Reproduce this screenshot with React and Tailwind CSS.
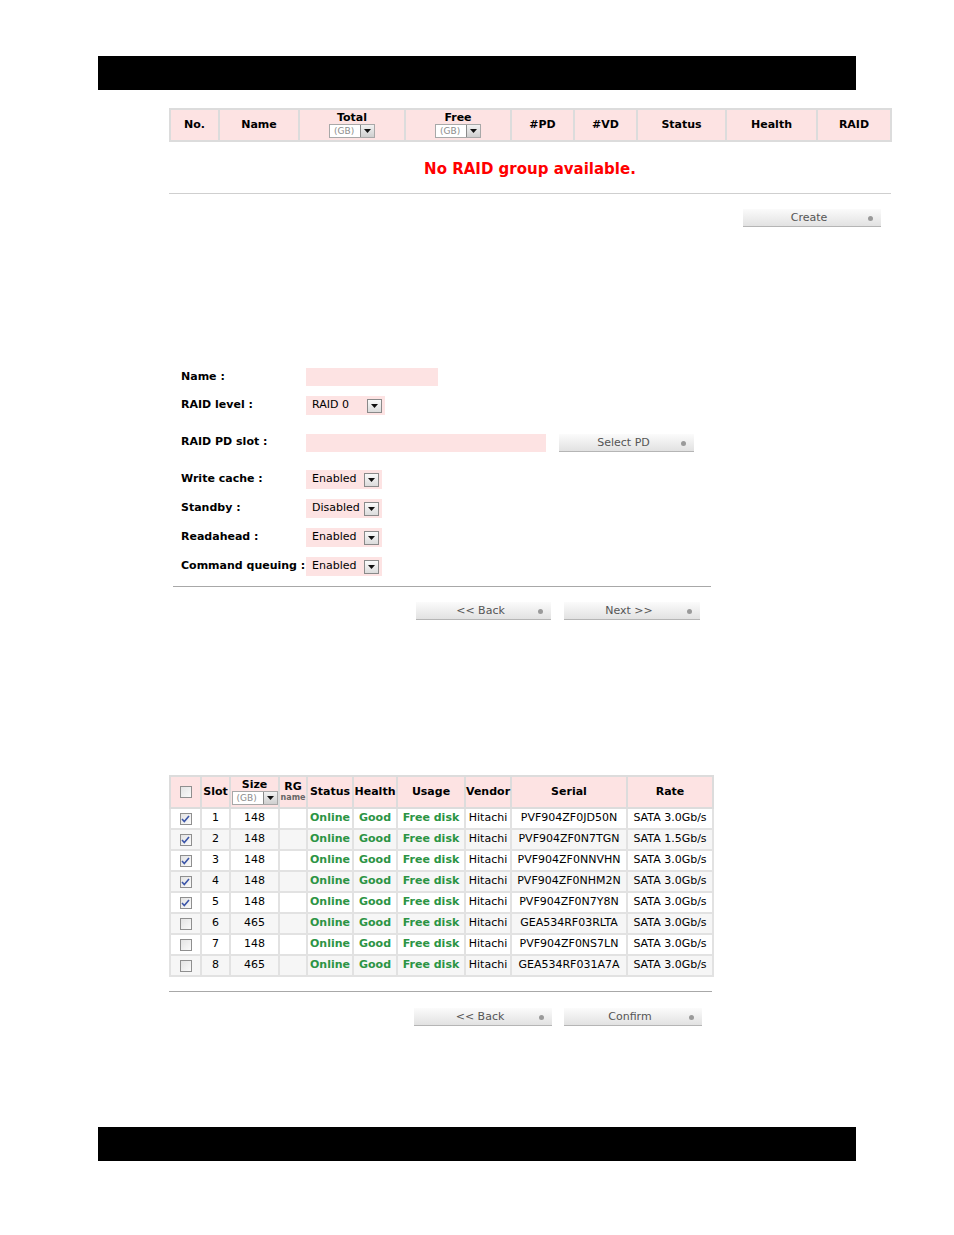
import React from "react";

const font = { fontFamily: '"DejaVu Sans", Verdana, sans-serif' };

const Arrow = () => (
  <span className="flex h-[14px] w-[15px] items-center justify-center border border-[#8a8a8a] bg-gradient-to-b from-[#fafafa] to-[#dcdcdc]">
    <svg width="7" height="4" viewBox="0 0 7 4">
      <path d="M0 0h7L3.5 4z" fill="#111" />
    </svg>
  </span>
);

const UnitSelect = () => (
  <span className="mx-auto flex h-[14px] w-[46px] items-center justify-between border border-[#a8a8a8] bg-white pl-[4px]">
    <span className="text-[9px] font-normal leading-none text-[#8c8c8c]">(GB)</span>
    <span className="flex h-[12px] w-[14px] items-center justify-center border-l border-[#8a8a8a] bg-gradient-to-b from-[#f2f2f2] to-[#cfcfcf]">
      <svg width="7" height="4" viewBox="0 0 7 4">
        <path d="M0 0h7L3.5 4z" fill="#111" />
      </svg>
    </span>
  </span>
);

const Btn = ({ label, w = "w-[135px]" }) => (
  <button
    className={`relative flex h-[18px] ${w} items-center justify-center border-b border-[#b5b5b5] bg-gradient-to-b from-[#fbfbfb] to-[#e2e2e2] text-[11px] leading-none text-[#555]`}
  >
    <span className="pr-[6px]">{label}</span>
    <span className="absolute right-[8px] top-[7px] h-[5px] w-[5px] rounded-full bg-[#9a9a9a]" />
  </button>
);

const Check = ({ on }) => (
  <span className="mx-auto flex h-[12px] w-[12px] items-center justify-center border border-[#8f8f8f] bg-gradient-to-br from-[#e4e4e4] to-[#fafafa]">
    {on && (
      <svg width="9" height="8" viewBox="0 0 9 8">
        <path d="M1 4l2.3 2.5L8 1" stroke="#3b55a8" strokeWidth="1.6" fill="none" />
      </svg>
    )}
  </span>
);

const PinkSelect = ({ value, w }) => (
  <div className={`flex h-[19px] ${w} items-center justify-between bg-[#fde3e3] pl-[6px] pr-[3px]`}>
    <span className="text-[11px] text-black">{value}</span>
    <Arrow />
  </div>
);

const groupCols = [
  ["No.", 49],
  ["Name", 80],
  ["Total", 106, true],
  ["Free", 106, true],
  ["#PD", 63],
  ["#VD", 63],
  ["Status", 89],
  ["Health", 91],
  ["RAID", 74],
];

const disks = [
  [true, 1, 148, "PVF904ZF0JD50N", "SATA 3.0Gb/s"],
  [true, 2, 148, "PVF904ZF0N7TGN", "SATA 1.5Gb/s"],
  [true, 3, 148, "PVF904ZF0NNVHN", "SATA 3.0Gb/s"],
  [true, 4, 148, "PVF904ZF0NHM2N", "SATA 3.0Gb/s"],
  [true, 5, 148, "PVF904ZF0N7Y8N", "SATA 3.0Gb/s"],
  [false, 6, 465, "GEA534RF03RLTA", "SATA 3.0Gb/s"],
  [false, 7, 148, "PVF904ZF0NS7LN", "SATA 3.0Gb/s"],
  [false, 8, 465, "GEA534RF031A7A", "SATA 3.0Gb/s"],
];

const diskCols = [31, 29, 49, 28, 46, 44, 68, 46, 116, 86];

const Row = ({ label, children, h = "h-[29px]", extra = "" }) => (
  <div className={`flex ${h} items-center ${extra}`}>
    <div className="w-[133px] pl-[8px] text-[11px] font-bold text-black">{label}</div>
    {children}
  </div>
);

export default function App() {
  const th = "border-2 border-[#dcdcdc] bg-[#fde3e3] text-[11px] font-bold text-black";
  const td = "border-2 border-[#e2e2e2] text-center text-[11px]";
  const plain = `${td} text-black`;
  const green = `${td} text-[#2c9444] font-bold`;
  return (
    <div className="min-h-[1235px] w-[954px] bg-white pt-[56px]" style={font}>
      <div className="mx-[98px] h-[34px] bg-black" />

      {/* RAID group list */}
      <div className="ml-[169px] mt-[18px] w-[722px]">
        <table className="w-full table-fixed border-collapse">
          <colgroup>
            {groupCols.map(([n, w]) => (
              <col key={n} style={{ width: w }} />
            ))}
          </colgroup>
          <thead>
            <tr className="h-[32px]">
              {groupCols.map(([n, , unit]) => (
                <th key={n} className={th}>
                  {unit ? (
                    <div className="flex flex-col items-center leading-[12px]">
                      <span>{n}</span>
                      <UnitSelect />
                    </div>
                  ) : (
                    n
                  )}
                </th>
              ))}
            </tr>
          </thead>
        </table>
        <div className="h-[52px] border-b border-[#cfcfcf] pt-[18px] text-center text-[15px] font-bold leading-[18px] text-[#ff0000]">
          No RAID group available.
        </div>
        <div className="mt-[15px] flex justify-end pr-[10px]">
          <Btn label="Create" w="w-[138px]" />
        </div>
      </div>

      {/* Create form */}
      <div className="ml-[173px] mt-[136px] w-[538px]">
        <Row label="Name :" h="h-[28px]">
          <div className="h-[18px] w-[132px] bg-[#fde3e3]" />
        </Row>
        <Row label="RAID level :">
          <PinkSelect value="RAID 0" w="w-[79px]" />
        </Row>
        <Row label="RAID PD slot :" extra="mt-[8px]">
          <div className="h-[18px] w-[240px] bg-[#fde3e3]" />
          <div className="ml-[13px]">
            <Btn label="Select PD" />
          </div>
        </Row>
        <Row label="Write cache :" extra="mt-[8px]">
          <PinkSelect value="Enabled" w="w-[76px]" />
        </Row>
        <Row label="Standby :">
          <PinkSelect value="Disabled" w="w-[76px]" />
        </Row>
        <Row label="Readahead :">
          <PinkSelect value="Enabled" w="w-[76px]" />
        </Row>
        <Row label="Command queuing :">
          <PinkSelect value="Enabled" w="w-[76px]" />
        </Row>
        <div className="mt-[5px] border-t border-[#a8a8a8]" />
        <div className="mt-[15px] flex gap-[13px] pl-[243px]">
          <Btn label="<< Back" />
          <Btn label="Next >>" w="w-[136px]" />
        </div>
      </div>

      {/* Physical disk selection */}
      <div className="ml-[169px] mt-[155px] w-[543px]">
        <table className="w-full table-fixed border-collapse">
          <colgroup>
            {diskCols.map((w, i) => (
              <col key={i} style={{ width: w }} />
            ))}
          </colgroup>
          <thead>
            <tr className="h-[32px]">
              <th className={th}>
                <Check on={false} />
              </th>
              <th className={th}>Slot</th>
              <th className={th}>
                <div className="flex flex-col items-center leading-[12px]">
                  <span>Size</span>
                  <UnitSelect />
                </div>
              </th>
              <th className={th}>
                <div className="flex flex-col items-center leading-[11px]">
                  <span>RG</span>
                  <span className="text-[8px] font-bold text-[#666]">name</span>
                </div>
              </th>
              <th className={th}>Status</th>
              <th className={th}>Health</th>
              <th className={th}>Usage</th>
              <th className={th}>Vendor</th>
              <th className={th}>Serial</th>
              <th className={th}>Rate</th>
            </tr>
          </thead>
          <tbody>
            {disks.map(([on, slot, size, serial, rate], i) => (
              <tr key={slot} className={`h-[21px] ${i % 2 ? "bg-[#f6f6f6]" : "bg-white"}`}>
                <td className={plain}>
                  <Check on={on} />
                </td>
                <td className={plain}>{slot}</td>
                <td className={plain}>{size}</td>
                <td className={plain}></td>
                <td className={green}>Online</td>
                <td className={green}>Good</td>
                <td className={green}>Free disk</td>
                <td className={plain}>Hitachi</td>
                <td className={plain}>{serial}</td>
                <td className={plain}>{rate}</td>
              </tr>
            ))}
          </tbody>
        </table>
        <div className="mt-[14px] border-t border-[#a8a8a8]" />
        <div className="mt-[16px] flex gap-[12px] pl-[245px]">
          <Btn label="<< Back" w="w-[138px]" />
          <Btn label="Confirm" w="w-[138px]" />
        </div>
      </div>

      <div className="mx-[98px] mt-[101px] h-[34px] bg-black" />
    </div>
  );
}
